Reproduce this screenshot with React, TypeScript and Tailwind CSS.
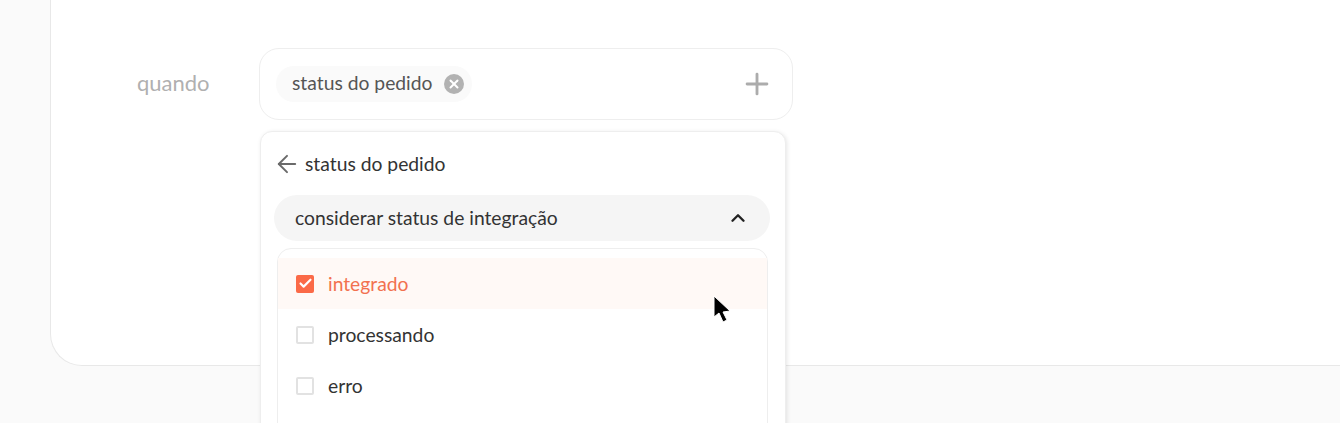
import { ArrowLeft, Check, ChevronUp, Plus, X } from "lucide-react";

interface OptionProps {
  label: string;
  checked?: boolean;
}

function Option({ label, checked }: OptionProps) {
  return (
    <div className={`flex h-[51px] items-center gap-[14px] pl-[18px] ${checked ? "bg-[#fff9f6] text-[#f2714f]" : "text-[#333333]"}`}>
      {checked ? (
        <span className="flex h-[18px] w-[18px] items-center justify-center rounded-[2px] bg-[#fb6a47]">
          <Check size={15} strokeWidth={3.4} className="text-white" />
        </span>
      ) : (
        <span className="h-[18px] w-[18px] rounded-[2px] border-2 border-[#e2e2e2] bg-white" />
      )}
      <span className="text-[19.3px] leading-none">{label}</span>
    </div>
  );
}

export default function App() {
  return (
    <div className="h-[423px] overflow-hidden bg-[#fafafa] pl-[50px] font-['Lato','Noto_Sans',sans-serif]">
      <div className="flex h-[366px] rounded-bl-[32px] border-b border-l border-[#e8e8e8] bg-white pl-[86px] pt-[48px]">
        <div className="w-[122px] pt-[23px] text-[22px] leading-[24px] text-[#b0b0b0]">quando</div>
        <div className="w-[534px]">
          <div className="flex h-[72px] items-center justify-between rounded-[20px] border border-[#eeeeee] bg-white pl-[16px] pr-[18px]">
            <div className="flex h-[36px] items-center gap-[12px] rounded-full bg-[#fafafa] pl-[16px] pr-[8px]">
              <span className="pb-[2px] text-[19.3px] leading-none text-[#555555]">status do pedido</span>
              <span className="flex h-[20px] w-[20px] items-center justify-center rounded-full bg-[#b2b2b2]">
                <X size={14} strokeWidth={3.4} className="text-white" />
              </span>
            </div>
            <Plus size={34} strokeWidth={2} className="text-[#acacac]" />
          </div>
          <div className="ml-[1px] mt-[11px] h-[320px] w-[526px] rounded-t-[12px] border border-[#eeeeee] bg-white pl-[13px] pt-[19px] shadow-[1px_1px_4px_rgba(0,0,0,0.1)]">
            <div className="flex h-[26px] items-center gap-[4px] text-[#333333]">
              <ArrowLeft size={28} strokeWidth={1.7} className="-ml-[1px] text-[#6a6a6a]" />
              <span className="text-[19.3px] leading-none">status do pedido</span>
            </div>
            <div className="mt-[18px] flex h-[46px] w-[496px] items-center justify-between rounded-full bg-[#f5f5f5] pl-[21px] pr-[21px]">
              <span className="text-[19.3px] leading-none text-[#333333]">considerar status de integração</span>
              <ChevronUp size={22} strokeWidth={2.6} className="text-[#222222]" />
            </div>
            <div className="ml-[3px] mt-[7px] h-[200px] w-[491px] rounded-t-[14px] border border-[#eeeeee] pt-[9px]">
              <Option label="integrado" checked />
              <Option label="processando" />
              <Option label="erro" />
            </div>
          </div>
        </div>
      </div>
      <svg className="absolute left-[712px] top-[294px]" width="22" height="32" viewBox="0 0 22 32">
        <path d="M2 2 L2 23 L7 19 L11 28 L15 26 L11 18 L18 17 Z" fill="#000000" stroke="#ffffff" strokeWidth="1" />
      </svg>
    </div>
  );
}
